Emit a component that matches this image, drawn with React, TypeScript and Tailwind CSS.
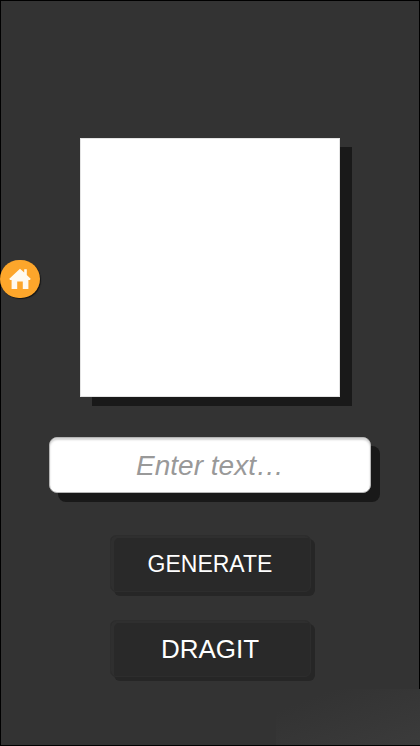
import { useState } from 'react';
import type { ReactNode } from 'react';

function HomeButton() {
  return (
    <button
      type="button"
      aria-label="Home"
      className="absolute top-[260px] left-0 flex h-[38px] w-10 items-center justify-center rounded-full bg-[#fda62b] shadow-[1px_1px_1px_#151515]"
    >
      <svg viewBox="0 0 22 22" className="size-[22px]" fill="#fffaf0" aria-hidden="true">
        <path d="M11 0.8 L15.2 4.6 V1.2 H17.8 V7 L21.7 10.7 L21 12 H19.4 V21 H13.8 V13.4 H8.2 V21 H2.6 V12 H1 L0.3 10.7 Z" />
      </svg>
    </button>
  );
}

function ActionButton({ className, children }: { className: string; children: ReactNode }) {
  return (
    <button
      type="button"
      className={`h-[57px] w-[201px] rounded-md border border-[#2d2d2d] bg-[#292929] pt-0.5 text-white shadow-[4px_4px_0_#262626,inset_3px_2px_0_#2f2f2f] ${className}`}
    >
      {children}
    </button>
  );
}

export default function App() {
  const [text, setText] = useState('');

  return (
    <main className="relative flex min-h-screen flex-col items-center overflow-hidden bg-[#333333] px-[49px] pt-[138px] font-['Liberation_Sans',Arial,sans-serif] shadow-[inset_0_0_0_1px_#000000]">
      {/* Soft light in the bottom corner */}
      <div className="absolute right-0 bottom-px h-14 w-36 bg-linear-to-br from-[#333333] from-20% to-[#3b3b3b]" />

      <HomeButton />

      {/* Output canvas */}
      <div className="h-[259px] w-[260px] border border-[#e4e4e4] bg-white shadow-[12px_9px_0_#191919]" />

      <input
        type="text"
        aria-label="Text"
        placeholder="Enter text…"
        value={text}
        onChange={(e) => setText(e.target.value)}
        className="mt-10 h-14 w-full rounded-lg border border-[#b5b5b5] bg-white pt-0.5 text-center text-[28px] text-[#333333] italic shadow-[9px_9px_0_#191919,inset_0_2px_2px_#d4d4d4] outline-none placeholder:text-[#999999]"
      />

      <div className="mt-[42px] flex flex-col gap-7">
        <ActionButton className="text-[23px]">GENERATE</ActionButton>
        <ActionButton className="text-[26px]">DRAGIT</ActionButton>
      </div>
    </main>
  );
}
